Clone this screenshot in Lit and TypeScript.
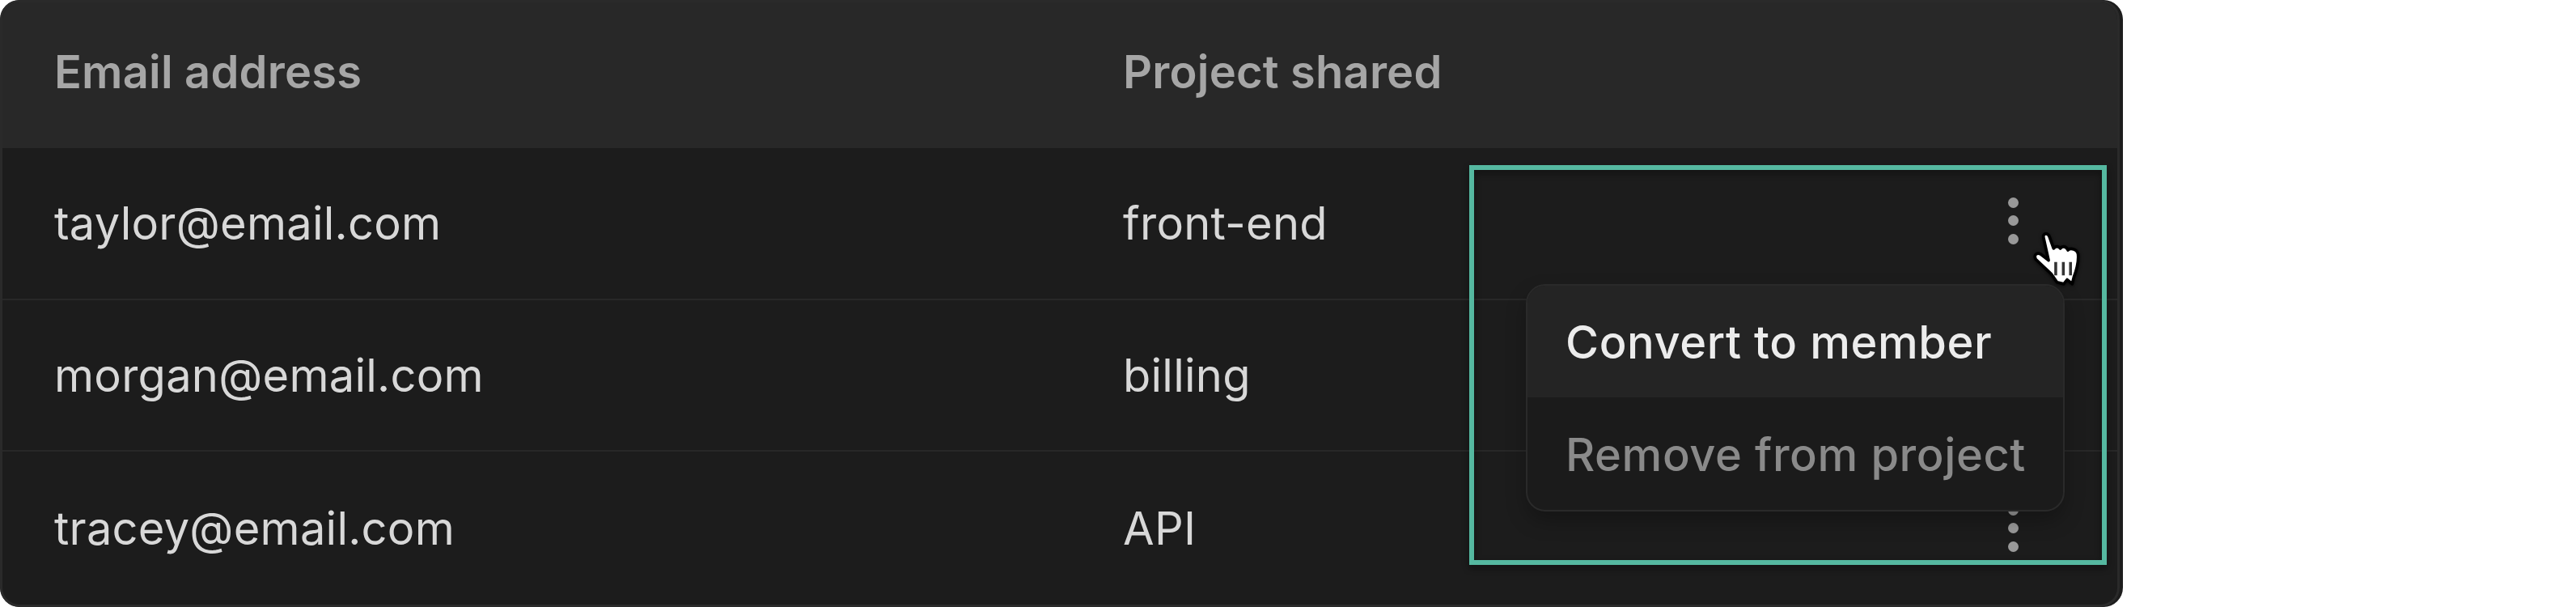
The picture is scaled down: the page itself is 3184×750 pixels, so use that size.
import { LitElement, html, css, svg } from "lit";
import { customElement } from "lit/decorators.js";

const rows = [
  { email: "taylor@email.com", project: "front-end" },
  { email: "morgan@email.com", project: "billing" },
  { email: "tracey@email.com", project: "API" },
];

const hand = svg`<svg class="hand" viewBox="0 0 60 66" width="63" height="69" fill="none">
  <path d="M14 7C13 2 19 1 21 6L26 20C28 17 32 17 34 20C36 17 41 17 43 22C46 19 54 21 55 27C56 37 53 46 50 54L48 62L42 57L38 62L30 60L23 50L5 33C2 28 6 24 11 27L20 34Z" fill="#fff" stroke="#000" stroke-width="3.6" stroke-linejoin="round"/>
  <path d="M28.5 36V52M37.5 36V52M46 36V52" stroke="#333" stroke-width="3.4"/>
</svg>`;

@customElement("app-root")
export class AppRoot extends LitElement {
  static styles = css`
    :host { display: block; width: 3184px; height: 750px; background: #fff; font-family: Inter, "Noto Sans", sans-serif; }
    .card { position: relative; box-sizing: border-box; width: 2624px; height: 750px; padding-right: 4px; background: #1d1d1d; border-radius: 24px; overflow: hidden; }
    .table { box-sizing: border-box; height: 100%; border: 3px solid #2a2a2a; border-radius: 24px; overflow: hidden; display: grid; grid-template-rows: 178px 188px 187px 1fr; background: #1c1c1c; }
    .row { display: grid; grid-template-columns: 1321px 1fr 258px; align-items: center; padding-left: 64px; border-top: 2px solid #282828; color: #d8d8d8; font-size: 56px; letter-spacing: 0.25px; }
    .head { border-top: none; background: #282828; color: #a6a6a6; font-weight: 600; letter-spacing: 0.2px; padding-bottom: 6px; }
    .dots { display: flex; flex-direction: column; align-items: center; gap: 9.5px; }
    .dots i { width: 13px; height: 13px; border-radius: 50%; background: #999; }
    .dots.first { margin-bottom: 7px; }
    .box { position: absolute; box-sizing: border-box; left: 1816px; top: 204px; width: 788px; height: 494px; border: 6px solid #55b8a0; filter: drop-shadow(0 4px 4px rgba(0,0,0,.45)); }
    .menu { position: absolute; box-sizing: border-box; left: 1886px; top: 351px; width: 666px; height: 281px; border: 2px solid #2a2a2a; border-radius: 24px; overflow: hidden; background: #1b1b1b; box-shadow: 0 12px 24px rgba(0,0,0,.25); display: grid; grid-template-rows: 138px 1fr; font-size: 56px; font-weight: 500; letter-spacing: 0.6px; }
    .item { display: flex; align-items: center; padding: 2px 0 0 47px; }
    .item.on { background: #242424; color: #ececec; }
    .item.off { color: #8a8a8a; }
    .hand { position: absolute; left: 2511px; top: 286px; filter: drop-shadow(0 1px 2px rgba(0,0,0,.6)); }
  `;

  render() {
    return html`<div class="card">
      <div class="table">
        <div class="row head"><span>Email address</span><span>Project shared</span><span></span></div>
        ${rows.map((r, i) => html`<div class="row">
          <span>${r.email}</span><span>${r.project}</span>
          <div class="dots ${i === 0 ? "first" : ""}"><i></i><i></i><i></i></div>
        </div>`)}
      </div>
      <div class="box"></div>
      <div class="menu">
        <div class="item on">Convert to member</div>
        <div class="item off">Remove from project</div>
      </div>
      ${hand}
    </div>`;
  }
}
